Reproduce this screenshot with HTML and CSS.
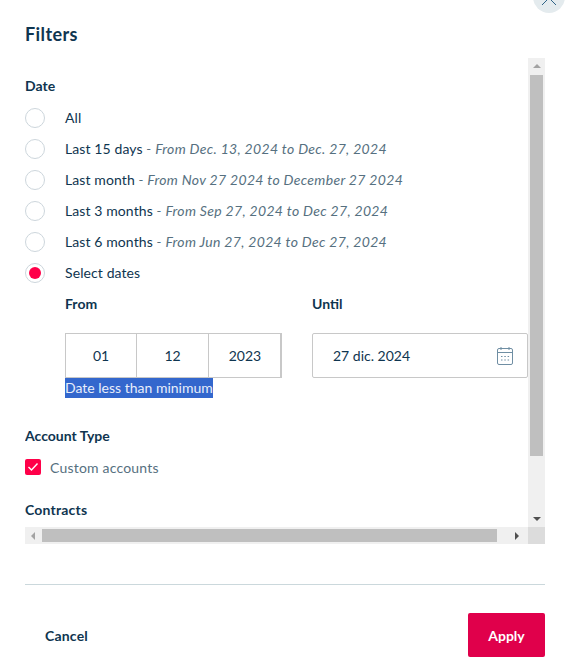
FILE: index.html
```html
<!DOCTYPE html>
<html lang="en">
<head>
  <meta charset="UTF-8">
  <title>Filters</title>
  <link rel="stylesheet" href="styles.css">
</head>
<body>
  <div class="modal">
    <button class="close-btn" type="button" aria-label="Close">
      <svg width="18" height="18" viewBox="0 0 18 18" fill="none" stroke="#2f6487" stroke-width="1"><path d="M2 2l14 14M16 2L2 16"/></svg>
    </button>

    <h1 class="title">Filters</h1>

    <div class="scroll-box">
      <div class="scroll-content">
        <h2 class="section-label">Date</h2>
        <div class="radio-list">
          <div class="radio-row"><span class="radio"></span><span>All</span></div>
          <div class="radio-row"><span class="radio"></span><span>Last 15 days <em>- From Dec. 13, 2024 to Dec. 27, 2024</em></span></div>
          <div class="radio-row"><span class="radio"></span><span>Last month <em>- From Nov 27 2024 to December 27 2024</em></span></div>
          <div class="radio-row"><span class="radio"></span><span>Last 3 months <em>- From Sep 27, 2024 to Dec 27, 2024</em></span></div>
          <div class="radio-row"><span class="radio"></span><span>Last 6 months <em>- From Jun 27, 2024 to Dec 27, 2024</em></span></div>
          <div class="radio-row"><span class="radio checked"></span><span>Select dates</span></div>
        </div>

        <div class="date-fields">
          <div class="date-col from-col">
            <div class="field-label">From</div>
            <div class="date-parts">
              <div class="date-part">01</div>
              <div class="date-part">12</div>
              <div class="date-part">2023</div>
            </div>
            <div class="date-error"><span>Date less than minimum</span></div>
          </div>
          <div class="date-col until-col">
            <div class="field-label">Until</div>
            <div class="date-input">
              <span>27 dic. 2024</span>
              <svg width="18" height="20" viewBox="0 0 18 20" fill="none" stroke="#6f8ea3" stroke-width="1">
                <rect x="1.5" y="2.5" width="15" height="16" rx="1.5"/>
                <path d="M1.5 6.5h15M5 1v3M13 1v3"/>
                <path d="M5 10.5h1.5M8.3 10.5h1.5M11.6 10.5h1.5M5 14h1.5M8.3 14h1.5M11.6 14h1.5"/>
              </svg>
            </div>
          </div>
        </div>

        <h2 class="section-label account-label">Account Type</h2>
        <div class="check-row">
          <span class="checkbox">
            <svg width="12" height="10" viewBox="0 0 12 10" fill="none" stroke="#fff" stroke-width="1.4"><path d="M1.5 5l3 3 6-6.5"/></svg>
          </span>
          <span>Custom accounts</span>
        </div>

        <h2 class="section-label contracts-label">Contracts</h2>
      </div>

      <div class="vbar">
        <span class="arrow up"></span>
        <div class="vtrack"><div class="vthumb"></div></div>
        <span class="arrow down"></span>
      </div>

      <div class="hbar">
        <span class="arrow left"></span>
        <div class="hthumb"></div>
        <span class="arrow right"></span>
      </div>
      <div class="corner"></div>
    </div>

    <div class="divider"></div>

    <div class="actions">
      <button class="cancel-btn" type="button">Cancel</button>
      <button class="apply-btn" type="button">Apply</button>
    </div>
  </div>
</body>
</html>
```

FILE: styles.css
```css
:root {
  --navy: #0f3550;
  --grey-text: #567080;
  --pink: #ff0049;
  --crimson: #e0004b;
  --border: #c8c8c8;
  --bar-bg: #f0f0f0;
  --bar-thumb: #bfbfbf;
}

* {
  box-sizing: border-box;
}

html,
body {
  margin: 0;
  height: 100%;
  overflow: hidden;
}

body {
  font-family: "Lato", "Noto Sans", sans-serif;
  font-size: 14px;
  color: var(--navy);
  background: #fff;
}

.modal {
  position: relative;
  height: 671px;
  padding: 0 31px 0 25px;
}

/* Close button is cut off by the top of the window */
.close-btn {
  position: absolute;
  top: -19px;
  left: 533px;
  width: 32px;
  height: 32px;
  padding: 0;
  border: none;
  border-radius: 50%;
  background: #e4ebee;
  display: flex;
  align-items: center;
  justify-content: center;
}

.close-btn svg {
  margin-top: 2px;
}

.title {
  margin: 0;
  padding-top: 23px;
  height: 58px;
  font-size: 18px;
  line-height: 22px;
  font-weight: 700;
  letter-spacing: 0.4px;
}

/* Scroll box with drawn scrollbars */
.scroll-box {
  display: grid;
  grid-template-columns: 503px 17px;
  grid-template-rows: 469px 17px;
  width: 520px;
}

.scroll-content {
  overflow: hidden;
  padding-top: 19px;
}

.section-label {
  margin: 0;
  font-size: 14px;
  line-height: 18px;
  font-weight: 700;
}

.radio-list {
  margin-top: 7px;
}

.radio-row {
  display: flex;
  align-items: center;
  gap: 20px;
  height: 31px;
  white-space: nowrap;
  letter-spacing: 0.1px;
}

.radio-row em {
  color: var(--grey-text);
  font-style: italic;
  letter-spacing: 0.32px;
}

.radio {
  flex: none;
  width: 20px;
  height: 20px;
  border: 1px solid #cdd6dc;
  border-radius: 50%;
  background: #fff;
  display: flex;
  align-items: center;
  justify-content: center;
}

.radio.checked::after {
  content: "";
  width: 12px;
  height: 12px;
  border-radius: 50%;
  background: var(--pink);
}

.date-fields {
  display: flex;
  padding-left: 40px;
  margin-top: 7px;
}

.from-col {
  width: 247px;
}

.until-col {
  width: 216px;
}

.field-label {
  height: 38px;
  line-height: 18px;
  font-weight: 700;
}

.date-parts {
  display: grid;
  grid-template-columns: 71px 72px 73px 1px;
  width: 217px;
  height: 45px;
  border: 1px solid var(--border);
  border-right-width: 2px;
}

.date-part {
  display: flex;
  align-items: center;
  justify-content: center;
  border-right: 1px solid var(--border);
}

.date-error {
  height: 20px;
  line-height: 20px;
}

.date-error span {
  display: inline-block;
  width: 148px;
  background: #3367cd;
  color: #e8eefb;
  white-space: nowrap;
}

.date-input {
  display: flex;
  align-items: center;
  justify-content: space-between;
  height: 45px;
  padding: 0 13px 0 20px;
  border: 1px solid var(--border);
  border-radius: 2px;
}

.account-label {
  margin-top: 29px;
}

.check-row {
  display: flex;
  align-items: center;
  gap: 9px;
  height: 16px;
  margin-top: 14px;
  color: var(--grey-text);
  letter-spacing: 0.2px;
}

.checkbox {
  flex: none;
  width: 16px;
  height: 16px;
  border-radius: 2px;
  background: var(--pink);
  display: flex;
  align-items: center;
  justify-content: center;
}

.contracts-label {
  margin-top: 26px;
  letter-spacing: 0.2px;
}

/* Scrollbars */
.vbar {
  display: flex;
  flex-direction: column;
  align-items: center;
  background: var(--bar-bg);
}

.vtrack {
  flex: 1;
  width: 13px;
}

.vthumb {
  height: 381px;
  background: var(--bar-thumb);
}

.hbar {
  display: flex;
  align-items: center;
  background: var(--bar-bg);
}

.hthumb {
  width: 455px;
  height: 13px;
  background: var(--bar-thumb);
}

.corner {
  background: #dcdcdc;
}

.arrow {
  flex: none;
  width: 0;
  height: 0;
  border-style: solid;
  border-color: transparent;
}

.arrow.up {
  margin: 6px 0 7px;
  border-width: 0 4px 4px;
  border-bottom-color: #a3a3a3;
}

.arrow.down {
  margin: 7px 0 6px;
  border-width: 4px 4px 0;
  border-top-color: #505050;
}

.arrow.left {
  margin: 0 7px 0 6px;
  border-width: 4px 4px 4px 0;
  border-right-color: #a3a3a3;
}

.arrow.right {
  margin-left: 18px;
  border-width: 4px 0 4px 4px;
  border-left-color: #505050;
}

.divider {
  height: 1px;
  margin-top: 40px;
  width: 520px;
  background: #cbd8dc;
}

.actions {
  display: flex;
  align-items: center;
  justify-content: space-between;
  width: 520px;
  margin-top: 28px;
}

.cancel-btn,
.apply-btn {
  font-family: inherit;
  font-size: 14px;
  font-weight: 700;
  border: none;
}

.cancel-btn {
  padding: 0 0 0 20px;
  background: none;
  color: var(--navy);
  letter-spacing: 0.2px;
}

.apply-btn {
  width: 77px;
  height: 44px;
  border-radius: 2px;
  background: var(--crimson);
  color: #fff;
}
```
